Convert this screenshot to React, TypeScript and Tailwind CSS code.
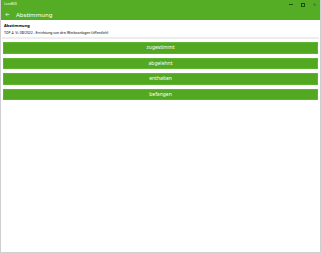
import React from "react";

export default function App() {
  const options = ["zugestimmt", "abgelehnt", "enthalten", "befangen"];
  return (
    <div
      className="w-[321px] h-[253px] bg-white flex flex-col border-x border-b border-[#cfcfcf] overflow-hidden"
      style={{ fontFamily: '"Noto Sans", "Open Sans", sans-serif' }}
    >
      <div className="bg-[#55ad25] flex flex-col text-white">
        <div className="h-[9px] flex items-center justify-between pl-[3px] pr-[4px]">
          <span className="text-[3px] leading-none">LoneBOS</span>
          <div className="flex items-center gap-[8px]">
            <div className="w-[4px] h-px bg-[#1e4d0a]" />
            <div className="w-[4px] h-[4px] border border-[#1e4d0a]" />
            <span className="text-[4px] leading-none text-[#1e4d0a]">✕</span>
          </div>
        </div>
        <div className="h-[11px] flex items-center pl-[4px]">
          <svg width="5" height="5" viewBox="0 0 10 10" className="mr-[6px]">
            <path d="M9 5H1.5M5 1.5L1.5 5L5 8.5" stroke="white" strokeWidth="1.2" fill="none" />
          </svg>
          <span className="text-[6px] leading-none">Abstimmung</span>
        </div>
      </div>
      <div className="flex flex-col px-[3px] pt-[2px]">
        <div className="text-[4px] font-bold leading-[7px] text-black">Abstimmung</div>
        <div className="text-[3.4px] leading-[7px] text-black">
          TOP 4. Vi. 08/2022 - Errichtung von drei Werbeanlagen (öffentlich)
        </div>
      </div>
      <div className="h-[2px] bg-[#ededed] mt-[1px] mx-[1px]" />
      <div className="flex flex-col gap-[4px] px-[2px] pt-[3px]">
        {options.map((o) => (
          <div
            key={o}
            className="h-[11.5px] bg-[#52a821] border border-[#5fb52f] flex items-center justify-center text-white text-[5px] leading-none"
          >
            {o}
          </div>
        ))}
      </div>
    </div>
  );
}
